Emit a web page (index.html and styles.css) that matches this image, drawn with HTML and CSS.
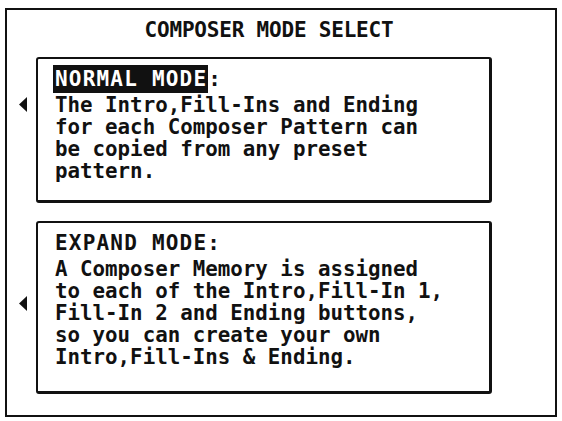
FILE: index.html
```html
<!DOCTYPE html>
<html lang="en">
<head>
    <meta charset="UTF-8">
    <meta name="viewport" content="width=device-width, initial-scale=1.0">
    <title>Composer Mode Select</title>
    <link rel="stylesheet" href="styles.css">
</head>
<body>

<div class="screen">
    <div class="title">COMPOSER MODE SELECT</div>

    <div class="option">
        <div class="cursor cursor-normal">
            <svg width="8" height="15" viewBox="0 0 8 15"><polygon points="8,0 8,15 0,7.5" fill="#111"/></svg>
        </div>
        <div class="box box-normal">
            <div class="heading"><span class="selected">NORMAL MODE</span>:</div>
            <div class="text">The Intro,Fill-Ins and Ending<br>for each Composer Pattern can<br>be copied from any preset<br>pattern.</div>
        </div>
    </div>

    <div class="option">
        <div class="cursor cursor-expand">
            <svg width="8" height="15" viewBox="0 0 8 15"><polygon points="8,0 8,15 0,7.5" fill="#111"/></svg>
        </div>
        <div class="box box-expand">
            <div class="heading">EXPAND MODE:</div>
            <div class="text">A Composer Memory is assigned<br>to each of the Intro,Fill-In 1,<br>Fill-In 2 and Ending buttons,<br>so you can create your own<br>Intro,Fill-Ins &amp; Ending.</div>
        </div>
    </div>
</div>

</body>
</html>
```

FILE: styles.css
```css
body {
    margin: 0;
    background-color: #fff;
    color: #111;
    font-family: "DejaVu Sans Mono", "Liberation Mono", monospace;
}
.screen {
    box-sizing: border-box;
    width: 552px;
    height: 409px;
    margin: 8px 0 0 5px;
    border: 2px solid #111;
}
.title {
    padding: 8px 24px 0 0;
    height: 39px;
    text-align: center;
    font-size: 21px;
    font-weight: bold;
    line-height: 24px;
    letter-spacing: -0.2px;
}
.option {
    display: flex;
    align-items: flex-start;
    margin-left: 12px;
    margin-bottom: 18px;
}
.cursor {
    width: 8px;
    margin-right: 9px;
}
.cursor svg {
    display: block;
}
.cursor-normal {
    margin-top: 40px;
}
.cursor-expand {
    margin-top: 75px;
}
.box {
    box-sizing: border-box;
    width: 456px;
    padding: 8px 0 0 15px;
    border: 2px solid #111;
    border-right-width: 3px;
    border-bottom-width: 3px;
    border-radius: 3px;
}
.box-normal {
    height: 146px;
}
.box-expand {
    height: 173px;
}
.heading {
    padding-left: 2px;
    font-size: 21px;
    font-weight: bold;
    line-height: 24px;
    letter-spacing: 1.2px;
    margin-bottom: 3px;
}
.selected {
    background-color: #111;
    color: #fff;
    padding: 2px 1px 2px 2px;
    margin-left: -2px;
}
.text {
    padding-left: 2px;
    font-size: 20.8px;
    font-weight: bold;
    line-height: 22px;
}
```
